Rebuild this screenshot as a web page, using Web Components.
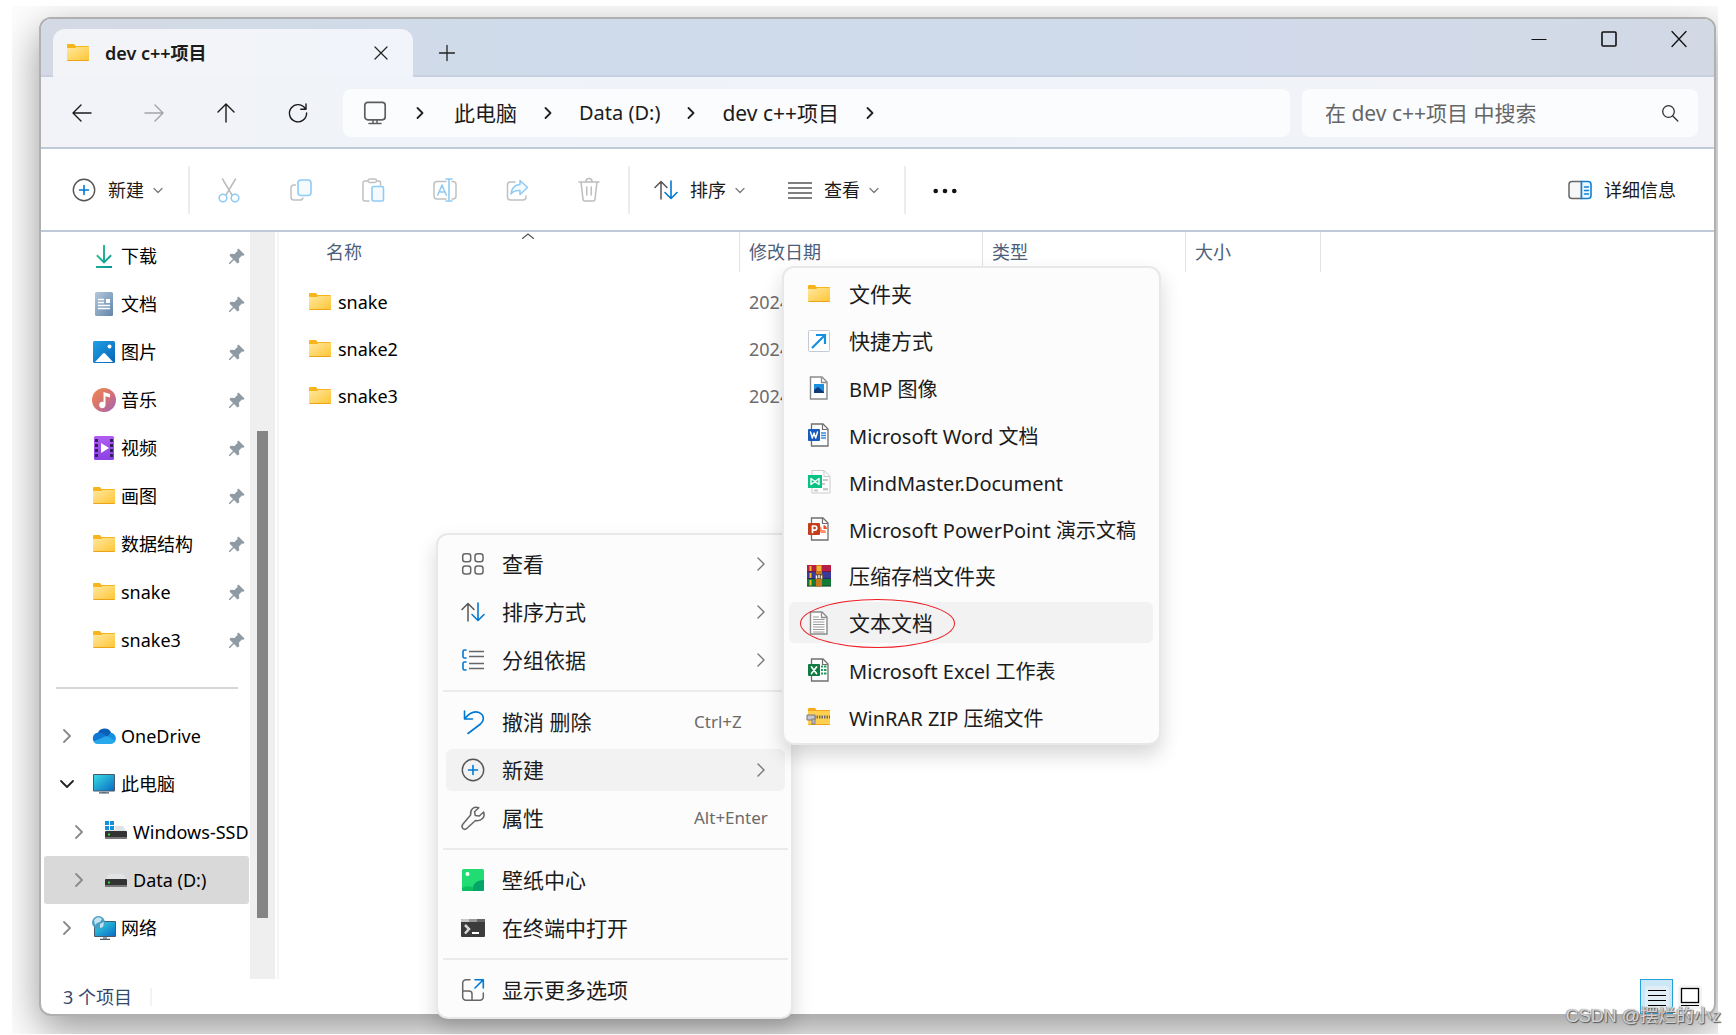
<!DOCTYPE html>
<html lang="zh-CN">
<head>
<meta charset="utf-8">
<title>dev c++项目</title>
<style>
html,body{margin:0;background:#fff}
body{font-family:"Noto Sans","Noto Sans CJK SC",sans-serif;font-size:18px;line-height:24px;color:#1b1b1b}
</style>
</head>
<body>
<desk-stage>
  <explorer-window>
    <title-bar slot="title"><explorer-tab icon="folder">dev c++项目</explorer-tab></title-bar>
    <nav-bar slot="nav">
      <crumb-link>此电脑</crumb-link>
      <crumb-link latin>Data (D:)</crumb-link>
      <crumb-link>dev c++项目</crumb-link>
    </nav-bar>
    <tool-bar slot="tools">
      <tool-button icon="new" menu>新建</tool-button>
      <tool-rule></tool-rule>
      <tool-button icon="cut" label="剪切"></tool-button>
      <tool-button icon="copy" label="复制"></tool-button>
      <tool-button icon="paste" label="粘贴"></tool-button>
      <tool-button icon="rename" label="重命名"></tool-button>
      <tool-button icon="share" label="共享"></tool-button>
      <tool-button icon="trash" label="删除"></tool-button>
      <tool-rule></tool-rule>
      <tool-button icon="sort" menu>排序</tool-button>
      <tool-button icon="lines" menu>查看</tool-button>
      <tool-rule></tool-rule>
      <tool-button icon="dots" label="更多"></tool-button>
      <tool-button slot="end" icon="details">详细信息</tool-button>
    </tool-bar>
    <side-nav slot="side">
      <side-item icon="download" pin>下载</side-item>
      <side-item icon="doc" pin>文档</side-item>
      <side-item icon="picture" pin>图片</side-item>
      <side-item icon="music" pin>音乐</side-item>
      <side-item icon="video" pin>视频</side-item>
      <side-item icon="folder" pin>画图</side-item>
      <side-item icon="folder" pin>数据结构</side-item>
      <side-item icon="folder" pin>snake</side-item>
      <side-item icon="folder" pin>snake3</side-item>
      <side-rule></side-rule>
      <side-item icon="onedrive" fold="right">OneDrive</side-item>
      <side-item icon="pc" fold="down">此电脑</side-item>
      <side-item icon="ssd" fold="right" sub>Windows-SSD</side-item>
      <side-item icon="drive" fold="right" sub selected>Data (D:)</side-item>
      <side-item icon="network" fold="right">网络</side-item>
    </side-nav>
    <file-list slot="main"></file-list>
    <status-bar slot="status">3 个项目</status-bar>
  </explorer-window>
  <context-menu slot="menu" class="main">
    <menu-item icon="grid" more>查看</menu-item>
    <menu-item icon="sort" more>排序方式</menu-item>
    <menu-item icon="group" more>分组依据</menu-item>
    <menu-rule></menu-rule>
    <menu-item icon="undo" keys="Ctrl+Z">撤消 删除</menu-item>
    <menu-item icon="new" more active>新建</menu-item>
    <menu-item icon="wrench" keys="Alt+Enter">属性</menu-item>
    <menu-rule></menu-rule>
    <menu-item icon="wallpaper">壁纸中心</menu-item>
    <menu-item icon="terminal">在终端中打开</menu-item>
    <menu-rule></menu-rule>
    <menu-item icon="expand">显示更多选项</menu-item>
  </context-menu>
  <context-menu slot="menu" class="sub" dense>
    <menu-item dense icon="folder">文件夹</menu-item>
    <menu-item dense icon="shortcut">快捷方式</menu-item>
    <menu-item dense latin icon="bmp">BMP 图像</menu-item>
    <menu-item dense latin icon="word">Microsoft Word 文档</menu-item>
    <menu-item dense latin icon="mind">MindMaster.Document</menu-item>
    <menu-item dense latin icon="ppt">Microsoft PowerPoint 演示文稿</menu-item>
    <menu-item dense icon="rar">压缩存档文件夹</menu-item>
    <menu-item dense icon="txt" active circled>文本文档</menu-item>
    <menu-item dense latin icon="excel">Microsoft Excel 工作表</menu-item>
    <menu-item dense latin icon="zip">WinRAR ZIP 压缩文件</menu-item>
  </context-menu>
  <water-mark slot="mark">CSDN @摆烂的小z</water-mark>
</desk-stage>

<script>
const page = (c, f = '<path d="M14.5 1.5v5h5"/>') =>
  `<path d="M3.500 1h11.500l5 5v17h-16.500z" fill="#fff" stroke="${c}" stroke-width="1.400"/><g fill="none" stroke="${c}" stroke-width="1.300">${f}</g>`;
const office = (c, mark, extra) =>
  `<path d="M4.500 1h11.500l5 5v17H4.500z" fill="#fff" stroke="#6f6f6f" stroke-width="1.300"/><path d="M15.500 1.300v5.200h5.200" fill="none" stroke="#6f6f6f" stroke-width="1.200"/>${extra}<rect x="1" y="6" width="12" height="12" rx="1" fill="${c}"/>${mark}`;
const S = (c, d, w = 1.5) => `<path d="${d}" fill="none" stroke="${c}" stroke-width="${w}" stroke-linecap="round" stroke-linejoin="round"/>`;
const driveBody = `<path d="M5 6h14l4 6H1z" fill="#e2e3e6"/><rect x="1" y="11" width="22" height="8" rx="1" fill="#333"/><rect x="1" y="17" width="22" height="2" fill="#777"/><rect x="4" y="13.500" width="2" height="2" fill="#2ee02e"/>`;
const screenGrad = `<linearGradient id="s" x1="0" y1="0" x2="1" y2="1"><stop offset="0" stop-color="#37dbe3"/><stop offset="1" stop-color="#0a6cc4"/></linearGradient>`;
const ICONS = {
  folder: `<linearGradient id="f" x1="0" y1="0" x2="1" y2="1"><stop offset="0" stop-color="#ffe8a0"/><stop offset="1" stop-color="#ffc533"/></linearGradient><path d="M1 4a1 1 0 0 1 1-1h6l1.500 2H22a1 1 0 0 1 1 1v4H1z" fill="#f8b51b"/><path d="M1 7h8l1.500-1H23v13a1 1 0 0 1-1 1H2a1 1 0 0 1-1-1z" fill="url(#f)"/><path d="M1.500 19.500h21" stroke="#eba418"/>`,
  download: `<linearGradient id="d" x1="0" y1="0" x2="1" y2="1"><stop offset="0" stop-color="#3cc88c"/><stop offset="1" stop-color="#00939b"/></linearGradient><path d="M11 1h2v15l5.500-5.500 1.300 1.400L12 19.700l-7.800-7.800 1.300-1.400L11 16zM4 22h16v2H4z" fill="url(#d)"/>`,
  doc: `<linearGradient id="g" x1="0" y1="0" x2="1" y2="1"><stop offset="0" stop-color="#b4c8dc"/><stop offset="1" stop-color="#6285aa"/></linearGradient><rect x="3" y="0" width="18" height="24" rx="1.500" fill="url(#g)"/><path d="M6 7.500h6M6 10.500h6M6 13.500h12M6 16.500h12" stroke="#fff" stroke-width="1.400"/><rect x="14" y="7" width="4" height="4" fill="#fff"/>`,
  picture: `<linearGradient id="p" x1="0" y1="0" x2="1" y2="1"><stop offset="0" stop-color="#1fa0e6"/><stop offset="1" stop-color="#0865b8"/></linearGradient><rect x="1" y="1" width="22" height="22" rx="1.500" fill="url(#p)"/><path d="M3 22l8-8.500q1-1 2 0l8 8.500z" fill="#fff"/><circle cx="17.500" cy="6.500" r="2" fill="#fff"/>`,
  music: `<linearGradient id="m" x1="0" y1="0" x2="1" y2="1"><stop offset="0" stop-color="#f28a4c"/><stop offset=".55" stop-color="#d07078"/><stop offset="1" stop-color="#9d62c4"/></linearGradient><circle cx="12" cy="12" r="12" fill="url(#m)"/><path d="M11.500 4l6.500 2v3.500l-4.500-1.300V17a3.200 3.200 0 1 1-2-3z" fill="#fff"/>`,
  video: `<linearGradient id="v" x1="0" y1="0" x2="0" y2="1"><stop offset="0" stop-color="#b05cf2"/><stop offset="1" stop-color="#8a42e2"/></linearGradient><rect x="2" y="0" width="20" height="24" rx="1.500" fill="url(#v)"/><path d="M4.500 3v19M19.500 3v19" stroke="#33205c" stroke-width="3" stroke-dasharray="3 2"/><path d="M9 7l8 5-8 5z" fill="#fff"/>`,
  onedrive: `<path d="M5.500 10a7.300 7.300 0 0 1 13.800-1l-4 5-6-1.500z" fill="#0a5fb8"/><path d="M3.500 19A5.600 5.600 0 0 1 5.500 8.700c3-.5 5.500 1 8 2.500l4 2.500-11 6z" fill="#0f78d4"/><path d="M18.500 8.800a5.600 5.600 0 0 1 4 9.200l-7.500-5z" fill="#1490df"/><path d="M1.500 17.500l11.500-5q2-.8 3.500.2l6.800 4.300q-1.300 3-4.800 3H5.500q-2.500 0-4-2.500z" fill="#28a8ea"/>`,
  pc: `${screenGrad}<rect x="1" y="2" width="22" height="17.500" rx="1" fill="#47596b"/><rect x="2" y="3" width="20" height="15.500" fill="url(#s)"/><path d="M10 19.500h4V21h-4z" fill="#9aa3ad"/><path d="M7 20.800h10" stroke="#4b5a68" stroke-width="1.300"/>`,
  ssd: `${driveBody}<path d="M0 0h11v10H0z" fill="#fff"/><path d="M1 1h4v4H1zM6 1h4v4H6zM1 6h4v4H1zM6 6h4v4H6z" fill="#1391df"/>`,
  drive: driveBody,
  network: `${screenGrad}<rect x="2" y="5" width="22" height="16" rx="1" fill="#47596b"/><rect x="3" y="6" width="20" height="14" fill="url(#s)"/><path d="M11 21h4v2h-4z" fill="#9aa3ad"/><path d="M8 23.300h10" stroke="#4b5a68" stroke-width="1.300"/><circle cx="6.500" cy="6.500" r="6.500" fill="#4b9fc4"/><path d="M2 4q4-5 8-1l-2 3-3 1-2 2zM8 8l4-2-1 5-3 1z" fill="#c6e4f0"/>`,
  pin: `<path d="M13.500 4.500l6 6-1 1.200-1.500-.2-3 3 .2 4-1.700 1-3.500-3.500L5 20H4v-1l4-4-3.500-3.500 1-1.700 4 .2 3-3-.200-1.500z" fill="#8f9ba3"/>`,
  right: S('#8a8a8a', 'M9 6l6 6-6 6', 1.8),
  rightThin: S('#777', 'M9 6l6 6-6 6', 1.4),
  crumb: S('#222', 'M9.500 7l5 5-5 5', 1.8),
  down: S('#222', 'M6 9l6 6 6-6', 1.8),
  caret: S('#777', 'M8 10.500l4 4 4-4', 1.2),
  up2: S('#555', 'M6.500 9.500L12 5l5.500 4.500', 1.1),
  back: S('#1b1b1b', 'M21 12H3.500M11 4l-8 8 8 8', 1.4),
  fwd: S('#a2a2a8', 'M3 12h17.500M13 4l8 8-8 8', 1.4),
  up: S('#1b1b1b', 'M12 21V3.500M4 11l8-8 8 8', 1.4),
  refresh: S('#1b1b1b', 'M19.500 8A8.600 8.600 0 1 0 20.600 12M20 3v5.200h-5.200', 1.4),
  monitor: `<rect x="1.800" y="1.300" width="20.400" height="17.500" rx="3" fill="none" stroke="#5e5e5e" stroke-width="1.700"/>${S('#5e5e5e', 'M6 22.500h12M10 19v3M14 19v3', 1.500)}`,
  search: `<circle cx="10.500" cy="10.500" r="5.800" fill="none" stroke="#333" stroke-width="1.300"/>${S('#333', 'M14.800 15l5 5', 1.300)}`,
  new: `<circle cx="12" cy="12" r="10.700" fill="none" stroke="#555" stroke-width="1.400"/>${S('#0078d4', 'M12 7.500v9M7.500 12h9', 1.600)}`,
  cut: `${S('#bdbdbd', 'M5.500 1l9.500 16M18.500 1L9 17', 1.500)}<g fill="none" stroke="#90cbf3" stroke-width="1.600"><circle cx="6" cy="20" r="3.800"/><circle cx="18" cy="20" r="3.800"/></g>`,
  copy: `${S('#c0c0c0', 'M6.500 7H5a3 3 0 0 0-3 3v9a3 3 0 0 0 3 3h6q2.500 0 3-2')}<rect x="9" y="2" width="13" height="15.500" rx="3" fill="#f5faff" stroke="#90cbf3" stroke-width="1.600"/>`,
  paste: `${S('#c0c0c0', 'M7 3H3.500A1.500 1.500 0 0 0 2 4.500v17A1.500 1.500 0 0 0 3.500 23H8M15.500 3h2.500a1.500 1.500 0 0 1 1.500 1.500V7')}<rect x="7" y="1" width="8.500" height="3.500" rx="1.700" fill="#fff" stroke="#c0c0c0" stroke-width="1.400"/><rect x="11" y="8.500" width="11.500" height="14.500" rx="1.500" fill="#f5faff" stroke="#90cbf3" stroke-width="1.600"/>`,
  rename: `${S('#c0c0c0', 'M13 3.500H4a3 3 0 0 0-3 3V18a3 3 0 0 0 3 3h9M19 3.500h1a3 3 0 0 1 3 3V18a3 3 0 0 1-3 3h-1')}${S('#90cbf3', 'M4.800 17L9 7l4.200 10M6.300 14h5.400M16 1v22M13 1h6M13 23h6', 1.600)}`,
  share: `${S('#c0c0c0', 'M10 4H5.500a3 3 0 0 0-3 3v12a3 3 0 0 0 3 3H18a3 3 0 0 0 3-3v-1')}<path d="M15 2.500l7.500 7-7.500 7v-4q-6-.5-9 3.500 1-9 9-9.500z" fill="#f5faff" stroke="#90cbf3" stroke-width="1.500" stroke-linejoin="round"/>`,
  trash: S('#bdbdbd', 'M2 4h20M4 4l2 17a2 2 0 0 0 2 2h8a2 2 0 0 0 2-2l2-17M9 3.500a3 3 0 0 1 6 0M9.800 9v8M14.200 9v8'),
  sort: `${S('#555', 'M7 21V4M1 9.500l6-6 6 6', 1.500)}${S('#0078d4', 'M17 3v17M11 14.500l6 6 6-6', 1.600)}`,
  lines: `<path d="M0 5h24M0 10h24M0 15h24M0 20h24" stroke="#555" stroke-width="1.400"/>`,
  dots: `<g fill="#111"><circle cx="2.700" cy="13" r="2.300"/><circle cx="12" cy="13" r="2.300"/><circle cx="21.300" cy="13" r="2.300"/></g>`,
  details: `<path d="M13.500 3.500H4a3 3 0 0 0-3 3v11a3 3 0 0 0 3 3h9.500z" fill="#f7f7f7" stroke="#666" stroke-width="1.500"/><path d="M13.500 3.500H20a3 3 0 0 1 3 3v11a3 3 0 0 1-3 3h-6.500z" fill="#eef7ff" stroke="#0f80d8" stroke-width="1.600"/>${S('#0f80d8', 'M16.500 9h4M16.500 12.500h4M16.500 16h4', 1.500)}`,
  close: S('#222', 'M6 6l12 12M18 6L6 18', 1.2),
  plus: S('#222', 'M12 4.500v15M4.500 12h15', 1.3),
  min: `<path d="M4.500 12.500h15" stroke="#111"/>`,
  max: `<rect x="5" y="5" width="14" height="14" rx="1" fill="none" stroke="#111" stroke-width="1.600"/>`,
  close2: S('#111', 'M5 4.500l14 15M19 4.500l-14 15', 1.3),
  grid: `<g fill="none" stroke="#666" stroke-width="1.500"><rect x="1.700" y="1.700" width="8" height="8" rx="2.500"/><rect x="14" y="1.700" width="8" height="8" rx="2.500"/><rect x="1.700" y="14" width="8" height="8" rx="2.500"/><rect x="14" y="14" width="8" height="8" rx="2.500"/></g>`,
  group: `<path d="M8 3.500h15M8 8.500h15M8 15.500h15M8 20.500h15" stroke="#666" stroke-width="1.400"/>${S('#0078d4', 'M5 2H3.500Q2 2 2 3.500v5Q2 10 3.500 10H5M5 14H3.500Q2 14 2 15.500v5Q2 22 3.500 22H5', 1.600)}`,
  undo: S('#0078d4', 'M3.500 1v8h8M3.800 8.600C8 3.500 13 .5 18 2.500c6 2.700 5 8.500 1.500 11.500L7 23.500', 1.6),
  wrench: S('#666', 'M22.600 6l-4.300 4-4-.500-.800-3.800 4.300-4C13 0 9 3 9.600 9L1.800 18.200C-.500 21.500 3 25 6 22.300L14.500 14.500C20.500 15.500 24.500 11 22.600 6z', 1.5),
  wallpaper: `<rect x="1" y="1" width="22" height="22" rx="1.500" fill="#20dc72"/><path d="M11 23q1-11 12-11v10q0 1-1 1z" fill="#04a569"/><path d="M1 20q5-3 10-1l1 4H2q-1 0-1-1z" fill="#0cc060"/><circle cx="6.500" cy="6" r="2" fill="#fff"/>`,
  terminal: `<rect x="0" y="3" width="24" height="18" rx="1" fill="#3c3c3c"/><path d="M0 6V4q0-1 1-1h7v3z" fill="#c9c9c9"/><path d="M8 3h8v3H8z" fill="#999"/><path d="M16 3h7q1 0 1 1v2h-8z" fill="#666"/><path d="M4 9l4 4-4 4.500" fill="none" stroke="#d8d8d8" stroke-width="2.500"/><path d="M11 17h7" stroke="#fff" stroke-width="2"/>`,
  expand: `${S('#666', 'M9 1.700H5A3.300 3.300 0 0 0 1.700 5v14A3.300 3.300 0 0 0 5 22.300h14a3.300 3.300 0 0 0 3.300-3.300v-4M1.700 13H8a3 3 0 0 1 3 3v6.300')}${S('#0078d4', 'M14 1.700h8.300V10M22 2l-8 8', 1.600)}`,
  shortcut: `<rect x="1.500" y="1.500" width="21" height="21" rx="1" fill="#fff" stroke="#c3cad6"/><path d="M5 19L17.500 6.500M9 6h9v9" fill="none" stroke="#1490e0" stroke-width="2.200"/>`,
  bmp: `${page('#8a8a8a')}<rect x="7" y="8" width="10" height="9" fill="#1b8fe0"/><path d="M7 17v-3l4-3 6 5v1z" fill="#123a78"/>`,
  word: office('#185abd', S('#fff', 'M3.500 9l1.800 6L7 10l1.700 5 1.800-6', 1.4), '<path d="M14 10h5M14 12.500h5M14 15h5" stroke="#3b8be0" stroke-width="1.300"/>'),
  mind: `<path d="M5 .5h12l6 6v16.500H5z" fill="#fff" stroke="#c9c9c9"/><path d="M17 .5v6h6" fill="none" stroke="#c9c9c9"/><path d="M16 9h5v2h-5zM15 13h3v2h-3zM7 19.500h4v2H7zM16 14v7M16 18h5v2.500h-5z" fill="#c9c9c9"/><rect x="1" y="5" width="14" height="13" fill="#0ac285"/>${S('#fff', 'M4 14.500V8.500l8 6V8.500L4 14.500', 1.4)}`,
  ppt: office('#c43e1c', S('#fff', 'M5.500 15.500V9h2.200a2 2 0 0 1 0 4.200H5.500', 1.7), '<path d="M14 9a4.500 4.500 0 0 0 0 7h5q0-3-2-3h-2z" fill="#ff8f6b"/><path d="M16.500 8v4h3.500q-.5-3.500-3.500-4z" fill="#e0512c"/>'),
  excel: office('#107c41', S('#fff', 'M4.500 9l5 6.500M9.500 9l-5 6.500', 1.7), '<path d="M14 8.500h2M17 8.500h2.500M14 12h2M17 12h2.500M14 15.500h2M17 15.500h2.500" stroke="#1f9d5a" stroke-width="2"/>'),
  rar: `<rect y="1" width="24" height="7" fill="#b71f45"/><rect y="8" width="24" height="7" fill="#3a3a9c"/><rect y="15" width="24" height="7.500" fill="#147a35"/><path d="M0 7.500h24M0 14.500h24M0 22h24" stroke="#1d1430" stroke-opacity=".5"/><path d="M3.500 2v5M3.500 9v5M3.500 16v5.500" stroke="#f1b62a" stroke-width="2"/><rect x="9" y="1" width="6" height="21.500" fill="#c9771a"/><path d="M10 2h4v5h-4z" fill="#f2b53a"/><path d="M8 10h8v5H8z" fill="#6d5540"/><path d="M9.500 14.500v-3M12 14v-3M14.500 14.500v-3" stroke="#fff" stroke-width="1.300"/>`,
  txt: `${page('#8a8a8a')}<path d="M6 8.500h11.500M6 11h11.500M6 13.500h11.500M6 16h11.500M6 18.500h11.500M6 21h11.500M6 6h6" stroke="#9a9a9a" stroke-width="1.100"/>`,
  zip: `<path d="M1 4a1 1 0 0 1 1-1h6l1.500 2H23v4H1z" fill="#f8a91b"/><rect x="1" y="6" width="22" height="14" rx="1" fill="#ffd050"/><path d="M1.500 19.500h21" stroke="#eba418"/><path d="M7 12h16" stroke="#6c6c6c" stroke-width="3" stroke-dasharray="1.500 1"/><path d="M0 10h8v5H0z" fill="#c6c6cc" stroke="#777"/><rect x="5" y="14" width="3" height="5" fill="#b8b8be" stroke="#777" stroke-width=".800"/>`,
  vlist: `<rect width="24" height="24" rx="3" fill="#e2eef5"/><path d="M3 4.500h18M3 9.500h18M3 14.500h18M3 19.500h18" stroke="#000" stroke-width="1"/>`,
  vthumb: `<rect width="24" height="24" rx="3" fill="#f4f4f4"/><rect x="3.500" y="3.500" width="17" height="14" fill="#fff" stroke="#000" stroke-width="1.300"/><path d="M3 20.500h18" stroke="#000" stroke-width="1"/>`
};

function define(name, css, html) {
  customElements.define(name, class extends HTMLElement {
    constructor() { super(); this.attachShadow({ mode: 'open' }); }
    connectedCallback() {
      const t = document.createElement('template');
      t.innerHTML = `<style>*{box-sizing:border-box}:host{display:block;box-sizing:border-box}button,a{font:inherit;color:inherit;text-decoration:none;border:0;margin:0;padding:0;background:none;text-align:left}${css}</style>` +
        (typeof html === 'function' ? html(this) : html);
      this.shadowRoot.replaceChildren(t.content.cloneNode(true));
    }
  });
}
const ico = n => `<fx-icon name="${n}"></fx-icon>`;

define('fx-icon', ':host{display:block;flex:none;width:24px;height:24px}svg{display:block;width:24px;height:24px;overflow:visible}',
  el => `<svg viewBox="0 0 24 24" aria-hidden="true">${ICONS[el.getAttribute('name')] || ''}</svg>`);

define('desk-stage', `
  :host{position:relative;min-height:100vh;display:flex;padding:6px 18px 1px 12px;background:#fff;overflow:hidden}
  .shade{flex:1;display:flex;min-width:0;padding:11px 2px 18px 27px;background:#fdfdfd;overflow:hidden}
  ::slotted(explorer-window){flex:1;min-width:0}
  ::slotted(.main){position:absolute;left:436px;top:533px;width:357px}
  ::slotted(.sub){position:absolute;left:782px;top:266px;width:379px}
  ::slotted(water-mark){position:absolute;right:15px;bottom:7px}`,
  '<div class="shade"><slot></slot></div><slot name="menu"></slot><slot name="mark"></slot>');

define('explorer-window', `
  :host{display:flex;flex-direction:column;border:2px solid #b0b0b0;border-radius:12px;background:#fff;overflow:hidden;
    box-shadow:0 14px 40px rgba(0,0,0,.4)}
  .body{flex:1;display:flex;min-height:0}
  ::slotted(file-list){flex:1;min-width:0}`,
  '<slot name="title"></slot><slot name="nav"></slot><slot name="tools"></slot><div class="body"><slot name="side"></slot><slot name="main"></slot></div><slot name="status"></slot>');

define('title-bar', `
  :host{display:flex;height:58px;padding:0 23px 0 12px;background:linear-gradient(90deg,#d4dae5,#cfdbea 30%,#cfdbea 60%,#d2daea 75%,#d2d9e5);border-bottom:2px solid #c6d0df}
  ::slotted(explorer-tab){margin-top:10px}
  .add{align-self:flex-end;margin:0 0 10px 22px}
  .win{margin-left:auto;display:flex;gap:46px;padding:8px 0 0}
  button{height:24px}`,
  `<slot></slot><button class="add" aria-label="新标签页">${ico('plus')}</button>
   <div class="win"><button aria-label="最小化">${ico('min')}</button><button aria-label="最大化">${ico('max')}</button><button aria-label="关闭">${ico('close2')}</button></div>`);

define('explorer-tab', `
  :host{display:flex;align-items:center;width:360px;height:48px;padding:0 20px 0 13px;border-radius:12px 12px 0 0;background:linear-gradient(90deg,#f3f4f8,#f1f4fa);font-weight:600;color:#1b1b1b}
  .name{flex:1;padding-left:15px}
  button{height:24px}`,
  el => `${ico(el.getAttribute('icon'))}<span class="name"><slot></slot></span><button aria-label="关闭标签页">${ico('close')}</button>`);

define('nav-bar', `
  :host{display:flex;align-items:center;height:72px;padding:2px 16px 0 29px;background:linear-gradient(90deg,#f2f3f8,#eff3f9 35%,#f0f3f9 65%,#f2f3f8);border-bottom:2px solid #bfcad8}
  .go{display:flex;gap:48px;margin-right:33px}
  button{height:24px}
  .addr{flex:1;display:flex;align-items:center;height:48px;padding-left:20px;border-radius:8px;background:#fbfcfe;min-width:0}
  .addr>fx-icon:nth-child(2){margin:0 22px 0 21px}
  .find{display:flex;align-items:center;width:396px;height:48px;margin-left:12px;padding:0 16px 0 23px;border-radius:8px;background:#fbfcfe}
  input{flex:1;min-width:0;border:0;outline:0;padding:0;background:none;font:inherit;font-size:21px;color:#666}
  input::placeholder{color:#666;opacity:1}`,
  `<div class="go"><button aria-label="后退">${ico('back')}</button><button aria-label="前进">${ico('fwd')}</button><button aria-label="向上">${ico('up')}</button><button aria-label="刷新">${ico('refresh')}</button></div>
   <div class="addr">${ico('monitor')}${ico('crumb')}<slot></slot></div>
   <label class="find"><input type="text" aria-label="搜索" placeholder="在 dev c++项目 中搜索">${ico('search')}</label>`);

define('crumb-link', `
  :host{display:flex;align-items:center;font-size:21px;white-space:nowrap}
  :host([latin]){font-size:20px}
  fx-icon{margin:0 19px}`,
  `<a href="#"><slot></slot></a>${ico('crumb')}`);

define('tool-bar', `
  :host{display:flex;align-items:center;justify-content:space-between;height:83px;padding:0 38px 0 10px;background:#fff;border-bottom:2px solid #bfcad8}
  div{display:flex;align-items:center}`,
  '<div><slot></slot></div><div><slot name="end"></slot></div>');

define('tool-rule', ':host{width:2px;height:48px;margin:0 3px;background:#ececec}', '');

define('tool-button', `
  :host{display:flex}
  :host([label]){padding:0 24px}
  :host([menu]){padding:0 15px 0 21px}
  button{display:flex;align-items:center;gap:12px;height:24px;white-space:nowrap}
  .c{margin-left:-10px}`,
  el => el.hasAttribute('label')
    ? `<button aria-label="${el.getAttribute('label')}">${ico(el.getAttribute('icon'))}</button>`
    : `<button>${ico(el.getAttribute('icon'))}<span><slot></slot></span>${el.hasAttribute('menu') ? '<fx-icon class="c" name="caret"></fx-icon>' : ''}</button>`);

define('side-nav', `
  :host{display:flex;width:238px;flex:none;border-right:2px solid #f5f5f5}
  nav{width:209px;padding-bottom:27px}
  .track{display:flex;flex-direction:column;width:25px;padding:0 7px;background:#efefef}
  .a{flex:199}.thumb{flex:487;background:#858585}.b{flex:61}`,
  '<nav><slot></slot></nav><div class="track"><div class="a"></div><div class="thumb"></div><div class="b"></div></div>');

define('side-item', `
  a{display:flex;align-items:center;height:48px;margin-left:3px;width:205px;padding-left:11px;border-radius:3px;color:#000;overflow:hidden}
  :host([sub]) a{padding-left:23px}
  :host([selected]) a{background:#d9d9d9}
  .f{width:24px;margin-right:13px;flex:none}
  .t{flex:1;padding-left:5px;white-space:nowrap}`,
  el => `<a href="#"><span class="f">${el.hasAttribute('fold') ? ico(el.getAttribute('fold')) : ''}</span>${ico(el.getAttribute('icon'))}<span class="t"><slot></slot></span>${el.hasAttribute('pin') ? ico('pin') : ''}</a>`);

define('side-rule', ':host{display:flex;align-items:center;height:48px;padding:0 12px 0 15px}div{flex:1;height:2px;background:#d6d6d6}', '<div></div>');

define('file-list', `
  :host{position:relative}
  table{width:100%;table-layout:fixed;border-collapse:separate;border-spacing:0}
  th{height:40px;padding:0 0 0 9px;border-right:1px solid #e3e3e3;text-align:left;font-weight:400;color:#4c607a;line-height:24px}
  th:last-child{border:0}
  th:first-child{padding-left:47px}
  thead::after{content:"";display:block;height:6px}
  td{height:47px;padding:0 0 0 9px;color:#6d6d6d}
  td:first-child{padding-left:29px}
  a{display:flex;align-items:center;gap:6px;color:#000}
  .n{width:461px}.d{width:243px}.y{width:203px}.s{width:135px}
  .mark{position:absolute;left:237px;top:-3px}`,
  `<table><colgroup><col class="n"><col class="d"><col class="y"><col class="s"><col></colgroup>
   <thead><tr><th>名称</th><th>修改日期</th><th>类型</th><th>大小</th><th></th></tr></thead>
   <tbody>${['snake', 'snake2', 'snake3'].map(n => `<tr><td><a href="#">${ico('folder')}<span>${n}</span></a></td><td>2024</td><td></td><td></td><td></td></tr>`).join('')}</tbody></table>
   <fx-icon class="mark" name="up2"></fx-icon>`);

define('status-bar', `
  :host{display:flex;align-items:center;height:35px;padding:0 8px 0 22px;color:#33486a}
  .rule{width:2px;height:18px;margin-left:18px;background:#f3f3f3}
  .views{display:flex;align-items:center;margin-left:auto;height:35px}
  button{display:flex;align-items:center;justify-content:center;width:33px;height:35px}
  .on{border:1px solid #26a0da;background:#cce8f6;padding-top:3px}`,
  `<span><slot></slot></span><span class="rule"></span><div class="views"><button class="on" aria-label="详细信息视图">${ico('vlist')}</button><button aria-label="大图标视图">${ico('vthumb')}</button></div>`);

define('context-menu', `
  :host{padding:5px 6px 3px 8px;border:2px solid #e8e8e8;border-radius:12px;background:#fcfcfc;box-shadow:0 10px 20px rgba(0,0,0,.16)}
  :host([dense]){padding:2px 6px 3px 5px}`,
  '<slot></slot>');

define('menu-item', `
  :host{font-size:21px;padding:3px 0}
  :host([latin]){font-size:20px}
  button{position:relative;display:flex;align-items:center;width:100%;height:42px;padding:0 12px 0 15px;border-radius:6px;white-space:nowrap}
  :host([dense]) button{height:41px;padding-left:18px}
  :host([active]) button{background:#f2f2f2}
  .t{flex:1;padding-left:17px}
  :host([dense]) .t{padding-left:18px}
  :host([latin]) .t{padding-top:4px}
  .k{width:79px;font-size:17px;color:#6a6a6a}
  .ring{position:absolute;left:11px;top:-3px;width:155px;height:49px;border:1px solid #ee1c25;border-radius:50%}`,
  el => `<button>${ico(el.getAttribute('icon'))}<span class="t"><slot></slot></span>${el.hasAttribute('keys') ? `<span class="k">${el.getAttribute('keys')}</span>` : ''}${el.hasAttribute('more') ? ico('rightThin') : ''}${el.hasAttribute('circled') ? '<span class="ring"></span>' : ''}</button>`);

define('menu-rule', ':host{height:14px;padding:6px 0;margin:0 -3px}div{height:2px;background:#ebebeb}', '<div></div>');

define('water-mark', ':host{font-family:"Liberation Sans","Noto Sans CJK SC",sans-serif;color:#d2d2d2;text-shadow:1px 1px 1px #555,-1px 0 1px #999;white-space:nowrap}', '<slot></slot>');
</script>
</body>
</html>
